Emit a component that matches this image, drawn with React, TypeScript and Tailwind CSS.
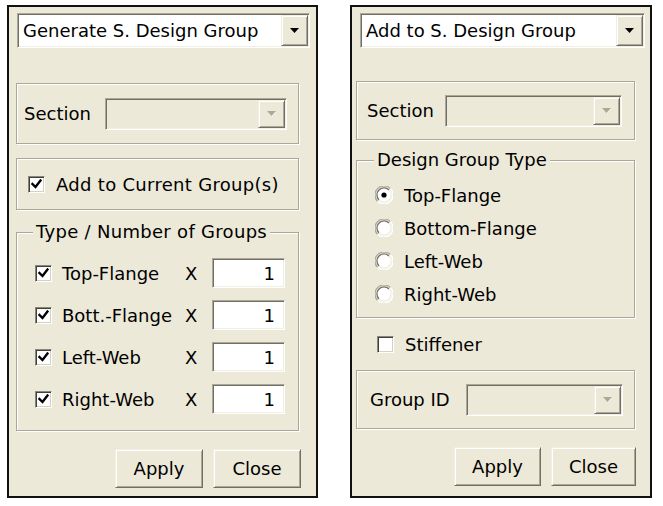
import React from "react";

const sunken =
  "border border-t-[#ACA899] border-l-[#ACA899] border-r-white border-b-white shadow-[inset_1px_1px_0_#716F64,inset_-1px_-1px_0_#F1EFE2]";
const boxSunken =
  "border border-t-[#8A8775] border-l-[#8A8775] border-r-white border-b-white shadow-[inset_1px_1px_0_#404040,inset_-1px_-1px_0_#D4D0C8]";
const raised =
  "border border-t-[#F1EFE2] border-l-[#F1EFE2] border-r-[#716F64] border-b-[#716F64] shadow-[inset_1px_1px_0_#fff,inset_-1px_-1px_0_#ACA899]";
const etched = "border border-[#ACA899] shadow-[inset_1px_1px_0_#fff,1px_1px_0_#fff]";

function Arrow({ disabled }: { disabled?: boolean }) {
  return (
    <svg width="11" height="7" viewBox="0 0 11 7">
      {disabled && <path d="M2 2h8l-4 4z" fill="#fff" />}
      <path d="M1 1h9l-4.5 5z" fill={disabled ? "#ACA899" : "#000"} />
    </svg>
  );
}

function Combo({ text, disabled, className }: { text?: string; disabled?: boolean; className: string }) {
  return (
    <div className={`${sunken} flex items-stretch p-[1px] ${disabled ? "bg-[#ECE9D8]" : "bg-white"} ${className}`}>
      <div className="flex-1 flex items-center pl-[4px] truncate">{text}</div>
      <div className={`${raised} w-[27px] bg-[#ECE9D8] flex items-center justify-center`}>
        <Arrow disabled={disabled} />
      </div>
    </div>
  );
}

function Check({ checked }: { checked: boolean }) {
  return (
    <div className={`${boxSunken} w-[17px] h-[17px] bg-white flex items-center justify-center shrink-0`}>
      {checked && (
        <svg width="11" height="11" viewBox="0 0 11 11">
          <path d="M1.5 5l3 3 5-6.5" stroke="#000" strokeWidth="2.4" fill="none" strokeLinecap="square" />
        </svg>
      )}
    </div>
  );
}

function Radio({ checked }: { checked: boolean }) {
  return (
    <svg width="18" height="18" viewBox="0 0 18 18" className="shrink-0">
      <circle cx="9" cy="9" r="8" fill="#fff" />
      <path d="M2.6 15.4A8 8 0 0 1 15.4 2.6" stroke="#ACA899" strokeWidth="1.3" fill="none" />
      <path d="M4 14A7 7 0 0 1 14 4" stroke="#716F64" strokeWidth="1.3" fill="none" />
      <path d="M15.4 2.6A8 8 0 0 1 2.6 15.4" stroke="#fff" strokeWidth="1.3" fill="none" />
      <path d="M14 4A7 7 0 0 1 4 14" stroke="#F1EFE2" strokeWidth="1.3" fill="none" />
      {checked && <circle cx="9" cy="9" r="2.6" fill="#000" />}
    </svg>
  );
}

function Button({ label, className }: { label: string; className: string }) {
  return (
    <button className={`${raised} bg-[#ECE9D8] h-[39px] flex items-center justify-center ${className}`}>
      {label}
    </button>
  );
}

function NumberField() {
  return (
    <div className={`${sunken} w-[73px] h-[30px] bg-white flex items-center justify-end pr-[9px]`}>1</div>
  );
}

function GeneratePanel() {
  const rows = ["Top-Flange", "Bott.-Flange", "Left-Web", "Right-Web"];
  return (
    <div className="w-[311px] h-[493px] border-2 border-[#111] bg-[#ECE9D8] flex flex-col">
      <Combo text="Generate S. Design Group" className="mt-[6px] ml-[8px] w-[293px] h-[35px]" />

      <div className={`${etched} mt-[35px] ml-[7px] w-[283px] h-[61px] flex items-center pl-[7px]`}>
        <span className="w-[81px]">Section</span>
        <Combo disabled className="w-[182px] h-[32px]" />
      </div>

      <div className={`${etched} mt-[14px] ml-[7px] w-[283px] h-[52px] flex items-center pl-[11px] gap-[11px]`}>
        <Check checked />
        <span className="tracking-[0.3px]">Add to Current Group(s)</span>
      </div>

      <fieldset className={`${etched} mt-[11px] ml-[7px] w-[283px] pb-[16px]`}>
        <legend className="ml-[16px] px-[3px] leading-[22px] bg-[#ECE9D8] tracking-[0.3px]">Type / Number of Groups</legend>
        <div className="flex flex-col gap-[12px] mt-[15px]">
          {rows.map((r) => (
            <div key={r} className="flex items-center h-[30px] pl-[18px]">
              <Check checked />
              <span className="ml-[10px] w-[123px]">{r}</span>
              <span className="w-[27px]">X</span>
              <NumberField />
            </div>
          ))}
        </div>
      </fieldset>

      <div className="flex justify-end gap-[10px] mt-[18px] mr-[15px]">
        <Button label="Apply" className="w-[88px]" />
        <Button label="Close" className="w-[88px]" />
      </div>
    </div>
  );
}

function AddPanel() {
  const types = ["Top-Flange", "Bottom-Flange", "Left-Web", "Right-Web"];
  return (
    <div className="w-[302px] h-[493px] border-2 border-[#111] bg-[#ECE9D8] flex flex-col">
      <Combo text="Add to S. Design Group" className="mt-[6px] ml-[8px] w-[285px] h-[35px]" />

      <div className={`${etched} mt-[33px] ml-[4px] w-[279px] h-[59px] flex items-center pl-[10px]`}>
        <span className="w-[78px]">Section</span>
        <Combo disabled className="w-[177px] h-[32px]" />
      </div>

      <fieldset className={`${etched} mt-[9px] ml-[4px] w-[279px] pb-[11px]`}>
        <legend className="ml-[17px] px-[3px] leading-[22px] bg-[#ECE9D8]">Design Group Type</legend>
        <div className="flex flex-col gap-[9px] mt-[12px]">
          {types.map((t, i) => (
            <div key={t} className="flex items-center h-[24px] pl-[18px] gap-[11px]">
              <Radio checked={i === 0} />
              <span>{t}</span>
            </div>
          ))}
        </div>
      </fieldset>

      <div className="flex items-center h-[24px] mt-[14px] pl-[25px] gap-[11px]">
        <Check checked={false} />
        <span>Stiffener</span>
      </div>

      <div className={`${etched} mt-[14px] ml-[4px] w-[279px] h-[59px] flex items-center pl-[13px]`}>
        <span className="w-[96px]">Group ID</span>
        <Combo disabled className="w-[157px] h-[32px]" />
      </div>

      <div className="flex justify-end gap-[10px] mt-[18px] mr-[14px]">
        <Button label="Apply" className="w-[87px]" />
        <Button label="Close" className="w-[85px]" />
      </div>
    </div>
  );
}

export default function App() {
  return (
    <div className="w-[663px] h-[506px] bg-white flex items-start gap-[32px] pt-[5px] pl-[7px] text-[18px] text-black font-['DejaVu_Sans',sans-serif]">
      <GeneratePanel />
      <AddPanel />
    </div>
  );
}
